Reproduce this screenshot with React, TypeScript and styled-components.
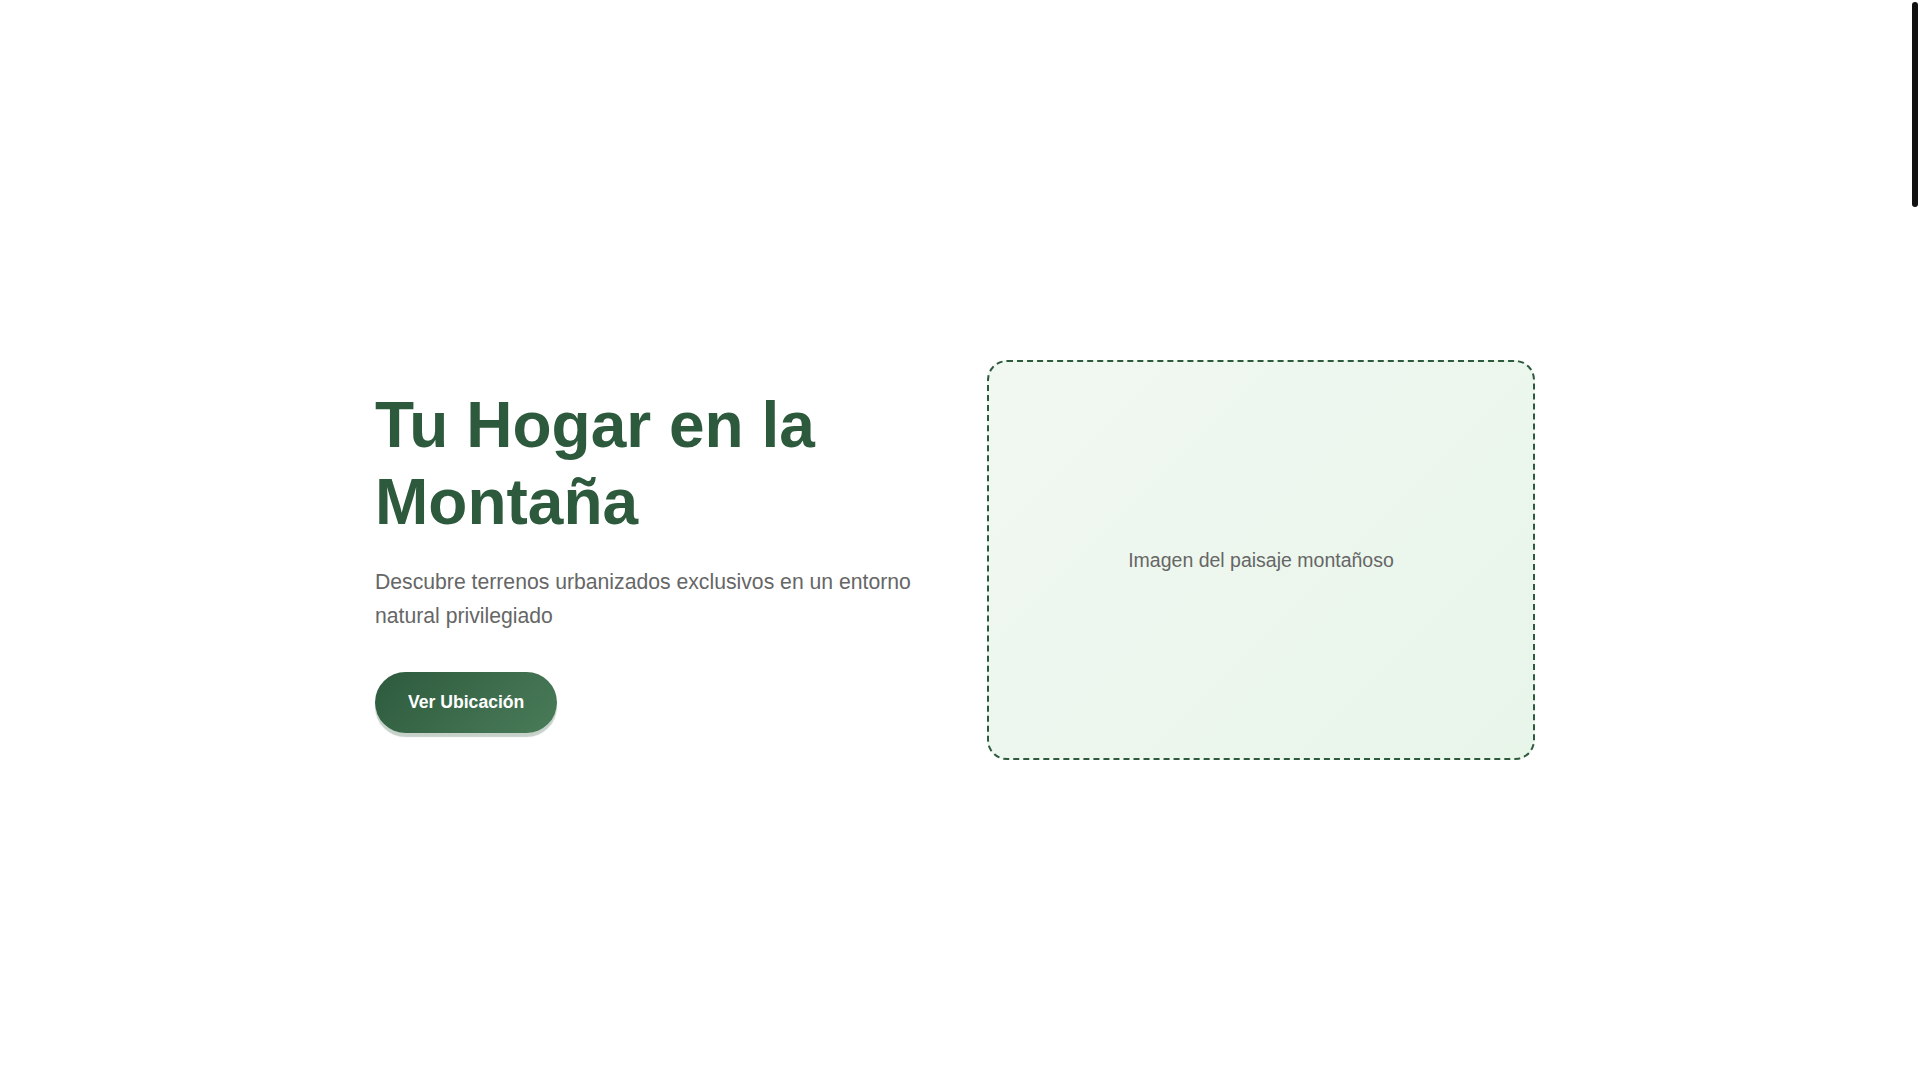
import React from 'react';
import styled, { createGlobalStyle } from 'styled-components';

const GlobalStyle = createGlobalStyle`
	* {
		box-sizing: border-box;
	}
	html,
	body {
		margin: 0;
		padding: 0;
		background: #ffffff;
		font-family: 'Liberation Sans', Arial, sans-serif;
	}
`;

// leaves a gutter on the right for the slim scroll indicator
const Page = styled.div`
	padding-right: 10px;
	background: #ffffff;
`;

const ScrollThumb = styled.div`
	position: fixed;
	top: 2px;
	right: 2px;
	width: 6px;
	height: 205px;
	border-radius: 3px;
	background: #111111;
`;

const Hero = styled.section`
	min-height: 100vh;
	display: flex;
	align-items: center;
	padding: 120px 20px 80px;
`;

const HeroInner = styled.div`
	width: 100%;
	max-width: 1160px;
	margin: 0 auto;
	display: grid;
	grid-template-columns: 1fr 1fr;
	gap: 64px;
	align-items: center;
`;

const HeroText = styled.div`
	display: flex;
	flex-direction: column;
	align-items: flex-start;
`;

const Title = styled.h1`
	margin: 0 0 24px;
	font-size: 64px;
	line-height: 1.2;
	font-weight: 700;
	color: #2d5a3d;
`;

const Lead = styled.p`
	margin: 0 0 39px;
	font-size: 21.2px;
	line-height: 1.6;
	color: #666666;
`;

const CtaButton = styled.button`
	border: none;
	border-radius: 50px;
	padding: 20px 33px;
	font-family: inherit;
	font-size: 17.6px;
	font-weight: 700;
	color: #ffffff;
	background: linear-gradient(135deg, #2d5a3d 0%, #4a7c59 100%);
	box-shadow: 0 4px 1px rgba(45, 90, 61, 0.28);
	cursor: pointer;
`;

const ImageSlot = styled.div`
	height: 400px;
	display: flex;
	align-items: center;
	justify-content: center;
	border: 2px dashed #2d5a3d;
	border-radius: 20px;
	background: linear-gradient(135deg, #f1f8f2 0%, #e8f5e9 100%);
	font-size: 19.5px;
	color: #666666;
`;

// rest of the landing page sits below the fold
const Below = styled.div`
	height: 4500px;
`;

export default function App() {
	return (
		<>
			<GlobalStyle />
			<Page>
				<Hero>
					<HeroInner>
						<HeroText>
							<Title>Tu Hogar en la Montaña</Title>
							<Lead>Descubre terrenos urbanizados exclusivos en un entorno natural privilegiado</Lead>
							<CtaButton>Ver Ubicación</CtaButton>
						</HeroText>
						<ImageSlot>Imagen del paisaje montañoso</ImageSlot>
					</HeroInner>
				</Hero>
				<Below />
			</Page>
			<ScrollThumb />
		</>
	);
}
